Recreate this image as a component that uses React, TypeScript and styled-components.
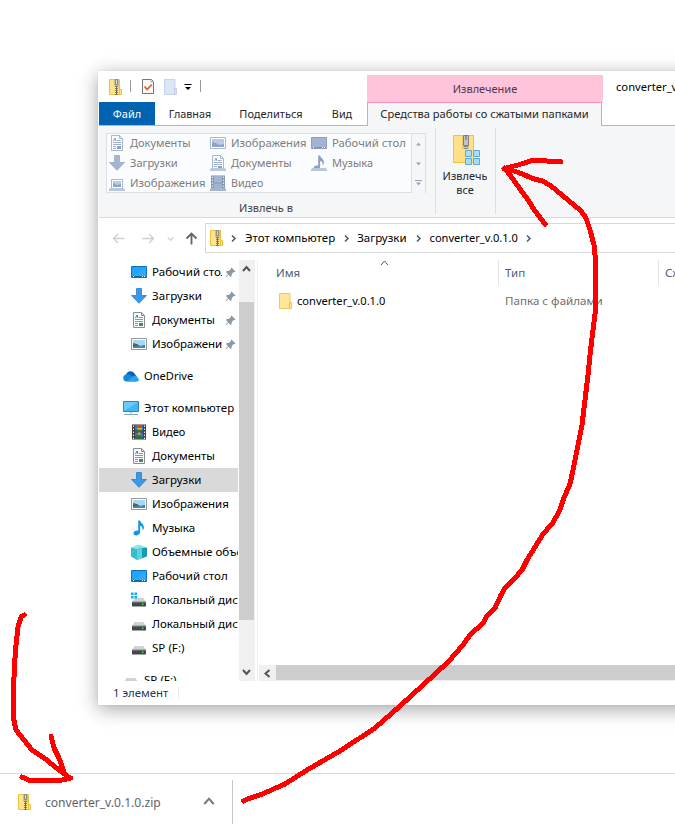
import React from "react";
import styled, { createGlobalStyle } from "styled-components";

const GlobalStyle = createGlobalStyle`
  * { box-sizing: border-box; }
  body { margin: 0; background: #fff; overflow: hidden; font-family: "Noto Sans", sans-serif; font-size: 11px; color: #000; }
  svg { display: block; flex: none; }
`;

const Screen = styled.div`
  position: relative;
  width: 675px;
  height: 830px;
  overflow: hidden;
  display: flex;
  flex-direction: column;
  background: #fff;
`;

const Desktop = styled.div`
  height: 773px;
  padding: 71px 0 0 98px;
  overflow: hidden;
`;

const Window = styled.div`
  width: 700px;
  height: 634px;
  padding-left: 1px;
  background: #fff;
  box-shadow: 0 4px 18px rgba(0, 0, 0, 0.36), 0 0 1px rgba(0, 0, 0, 0.15);
  display: flex;
  flex-direction: column;
`;

const Label = styled.span<{ $size?: number; $color?: string }>`
  flex: none;
  white-space: nowrap;
  line-height: 16px;
  font-size: ${(p) => p.$size ?? 11}px;
  color: ${(p) => p.$color ?? "inherit"};
`;

/* Title bar */
const TitleBar = styled.div`
  display: grid;
  grid-template-columns: 268px 236px 1fr;
  height: 31px;
  flex: none;
`;
const QuickAccess = styled.div`
  display: flex;
  align-items: center;
  padding-left: 9px;
`;
const Tick = styled.i<{ $left: number; $right: number }>`
  width: 1px;
  height: 12px;
  background: #9a9a9a;
  margin: 0 ${(p) => p.$right}px 2px ${(p) => p.$left}px;
`;
const Spacer = styled.i<{ $w: number }>`
  width: ${(p) => p.$w}px;
  flex: none;
`;
const ContextTitle = styled.div`
  margin-top: 4px;
  background: #ffc4dc;
  color: #4c3a45;
  display: flex;
  align-items: center;
  justify-content: center;
`;
const WindowTitle = styled.div`
  padding: 8px 0 0 13px;
  overflow: hidden;
`;

/* Tabs */
const TabRow = styled.div`
  display: flex;
  height: 24px;
  flex: none;
  color: #262626;
`;
const Tab = styled.div<{ $w: number; $kind?: "file" | "active" }>`
  width: ${(p) => p.$w}px;
  flex: none;
  display: flex;
  align-items: center;
  justify-content: center;
  ${(p) =>
    p.$kind === "file"
      ? "background:#0063b1;color:#fff;border-bottom:1px solid #ff90bd;"
      : p.$kind === "active"
      ? "background:#f4f6f8;border:1px solid #ff90bd;border-bottom:0;padding-bottom:2px;"
      : "border-bottom:1px solid #ff90bd;"}
`;

/* Ribbon */
const Ribbon = styled.div`
  height: 92px;
  flex: none;
  display: flex;
  background: #f4f6f8;
  border-bottom: 1px solid #d9dadb;
`;
const GalleryGroup = styled.div`
  width: 336px;
  padding: 7px 9px 0 7px;
  display: flex;
  flex-direction: column;
  align-items: center;
  gap: 7px;
  color: #444;
`;
const Gallery = styled.div`
  display: grid;
  grid-template-columns: 1fr 14px;
  width: 320px;
  height: 60px;
  border: 1px solid #dcdfe3;
  background: #fbfcfd;
`;
const GalleryGrid = styled.div`
  display: grid;
  grid-template-columns: 101px 101px 1fr;
  grid-template-rows: repeat(3, 20px);
  padding-left: 2px;
  margin-top: -1px;
`;
const GalleryItem = styled.div`
  display: flex;
  align-items: center;
  gap: 5px;
  color: #7d7d7d;
`;
const GalleryScroll = styled.div`
  display: grid;
  grid-template-rows: 1fr 1fr 1fr;
  place-items: center;
  border-left: 1px solid #dcdfe3;
  background: #f4f6f8;
`;
const ExtractGroup = styled.div`
  width: 61px;
  margin: 2px 0 3px;
  border-left: 1px solid #dcdfe3;
  border-right: 1px solid #dcdfe3;
  padding-top: 5px;
  display: flex;
  flex-direction: column;
  align-items: center;
  color: #262626;
`;
const ExtractCaption = styled.div`
  display: flex;
  flex-direction: column;
  align-items: center;
  margin-top: 1px;
  padding-right: 1px;
`;
const CaptionLine = styled(Label)`
  line-height: 13px;
  overflow: hidden;
  &:first-child { line-height: 15px; }
`;

/* Address bar */
const AddressRow = styled.div`
  display: flex;
  height: 30px;
  margin-top: 5px;
  flex: none;
`;
const NavButtons = styled.div`
  width: 106px;
  padding-left: 13px;
  display: flex;
  align-items: center;
`;
const AddressBox = styled.div`
  flex: 1;
  display: flex;
  align-items: center;
  border: 1px solid #d9d9d9;
  border-right: 0;
  padding-left: 3px;
`;

/* Body */
const Body = styled.div`
  display: flex;
  height: 421px;
  margin-top: 7px;
  flex: none;
`;
const NavTree = styled.div`
  width: 139px;
  overflow: hidden;
  display: flex;
  flex-direction: column;
`;
const NavRow = styled.div<{ $root?: boolean; $selected?: boolean; $gap?: boolean }>`
  display: flex;
  align-items: center;
  gap: 5px;
  height: 24px;
  flex: none;
  overflow: hidden;
  margin-top: ${(p) => (p.$gap ? 8 : 0)}px;
  padding-left: ${(p) => (p.$root ? 24 : 32)}px;
  background: ${(p) => (p.$selected ? "#d9d9d9" : "transparent")};
`;
const NavText = styled(Label)<{ $pinned?: boolean }>`
  ${(p) => p.$pinned && "width:70px;overflow:hidden;margin-right:-2px;"}
`;
const VScroll = styled.div`
  width: 16px;
  margin-left: 1px;
  padding-right: 1px;
  display: flex;
  flex-direction: column;
  align-items: center;
  background: #f0f0f0;
`;
const VThumb = styled.div`
  width: 15px;
  height: 318px;
  background: #cdcdcd;
`;
const ScrollButton = styled.div<{ $w: number; $h: number }>`
  width: ${(p) => p.$w}px;
  height: ${(p) => p.$h}px;
  display: flex;
  align-items: center;
  justify-content: center;
  flex: none;
`;
const Files = styled.div`
  flex: 1;
  margin-left: 2px;
  border-left: 1px solid #f0f0f0;
  padding-left: 1px;
  display: flex;
  flex-direction: column;
  overflow: hidden;
`;
const HeaderRow = styled.div`
  display: grid;
  grid-template-columns: 240px 160px 60px;
  height: 25px;
  color: #4c607a;
`;
const HeaderCell = styled.div<{ $pad: number }>`
  display: flex;
  align-items: center;
  padding-left: ${(p) => p.$pad}px;
  border-right: 1px solid #e3e3e3;
`;
const SortMark = styled.span`
  align-self: flex-start;
  margin: -1px 0 0 80px;
`;
const FileRow = styled.div`
  display: grid;
  grid-template-columns: 227px 1fr;
  margin-top: 4px;
  height: 24px;
  padding-left: 19px;
  align-items: center;
`;
const FileName = styled.div`
  display: flex;
  align-items: center;
  gap: 3px;
`;
const HScroll = styled.div`
  margin-top: auto;
  height: 16px;
  display: flex;
  background: #f0f0f0;
`;
const HThumb = styled.div`
  flex: 1;
  height: 15px;
  background: #cdcdcd;
`;
const StatusBar = styled.div`
  display: flex;
  align-items: center;
  height: 24px;
  padding-left: 14px;
  color: #26365c;
  background: #fff;
`;
const StatusDivider = styled.i`
  width: 1px;
  height: 12px;
  margin-left: 10px;
  background: #ececec;
`;

/* Download shelf */
const Shelf = styled.div`
  flex: 1;
  border-top: 1px solid #d8d8d8;
  padding-top: 6px;
`;
const ShelfItem = styled.div`
  width: 233px;
  height: 44px;
  padding: 0 17px 0 17px;
  display: flex;
  align-items: center;
  gap: 12px;
  border-right: 1px solid #c6c6c6;
  color: #5f6368;
`;
const ShelfName = styled(Label)`
  padding-top: 1px;
`;
const ShelfChevron = styled.span`
  margin-left: auto;
`;
const Annotation = styled.svg`
  position: absolute;
  inset: 0;
  pointer-events: none;
`;

/* Icons */
const ZipIcon = () => (
  <svg width="16" height="18" viewBox="0 0 16 18">
    <path d="M1.5 1.5h9.500v10h2.500v5h-12z" fill="#ffe48d" stroke="#e9c23f" />
    <path d="M11.500 1.500v9.500M11.500 11v5" stroke="#e9c23f" />
    <path d="M6 1h5v7H6z" fill="#c9bd8c" />
    <path d="M7.500 1.500h2v5h-2z" fill="#dedede" stroke="#777" strokeWidth=".8" />
    <path d="M8.500 8v9" stroke="#85816f" strokeWidth="3" strokeDasharray="1 1" />
    <path d="M8.500 8v9" stroke="#6a6a6a" />
  </svg>
);
const FolderIcon = ({ blue = false }: { blue?: boolean }) => (
  <svg width="16" height="18" viewBox="0 0 16 18">
    <path d="M1.5 1.5H12v9h1.5v6H1.5z" fill={blue ? "#dce6f4" : "#ffe69a"} stroke={blue ? "#c5d3e8" : "#ecc95c"} />
    <path d="M11.5 16v-5.5h2" fill="none" stroke={blue ? "#bccbe2" : "#e6bf48"} />
  </svg>
);
const CheckDoc = () => (
  <svg width="14" height="17" viewBox="0 0 14 17">
    <path d="M1.5 1.5h9l2 2v12h-11z" fill="#fafafa" stroke="#757575" />
    <path d="M10 1.5V4h2.5" fill="none" stroke="#999" strokeWidth=".8" />
    <path d="M3.5 8.5l2.6 3 4.7-5" fill="none" stroke="#ec5b1d" strokeWidth="1.8" />
  </svg>
);
const QuickArrow = () => (
  <svg width="8" height="8" viewBox="0 0 8 8">
    <path d="M.5 1.500h7" stroke="#000" />
    <path d="M1 4h6L4 7z" fill="#000" />
  </svg>
);

type IconProps = { muted?: boolean };
const DesktopIcon = ({ muted }: IconProps) => (
  <svg width="16" height="16" viewBox="0 0 16 16">
    <path d="M.5 2.5h15v11H.5z" fill={muted ? "#a3b4d3" : "#20a3f8"} stroke={muted ? "#8c9fc2" : "#0a74bd"} />
    {!muted && <path d="M1 12.5L15 3v9z" fill="#40b2ff" opacity=".5" />}
    <path d="M1 12.5h14" stroke={muted ? "#7d91b6" : "#0868a8"} />
    <path d="M2 12.5h1m8 0h1m1 0h1" stroke="#fff" />
  </svg>
);
const DownloadIcon = ({ muted }: IconProps) => (
  <svg width="16" height="16" viewBox="0 0 16 16">
    <path d="M5.5.5h5v7h5L8 15.3.5 7.5h5z" fill={muted ? "#a5b4cf" : "#3b97e8"} stroke={muted ? "#98a9c8" : "#257dce"} strokeWidth=".8" />
  </svg>
);
const Tray = () => <path d="M0 14l2-1h12l2 1v2H0z" fill="#b9c6dc" />;
const DocumentIcon = ({ muted, tray }: IconProps & { tray?: boolean }) => {
  const edge = muted ? "#a9b7d0" : "#8c8c8c";
  return (
    <svg width="16" height="16" viewBox="0 0 16 16">
      <path d="M2.5.5h8l3 3v12h-11z" fill="#fafcff" stroke={edge} />
      <path d="M10.5.5v3h3" fill="none" stroke={edge} />
      <path d="M4.500 6l1.500-3 1 3" fill="none" stroke={muted ? "#8a9dc0" : "#1f8bd0"} />
      <path d="M8 5.500h3.500M4 7.500h8M4 9.500h8M4 11.500h3M4 13.500h3" stroke={muted ? "#9dadca" : "#5aa6d3"} />
      <path d="M8 11h4v3H8z" fill={muted ? "#8da0c2" : "#52806a"} />
      {tray && <Tray />}
    </svg>
  );
};
const PictureIcon = ({ muted, tray }: IconProps & { tray?: boolean }) => (
  <svg width="16" height="16" viewBox="0 0 16 16">
    <path d={tray ? "M2.500 4.500h11v9h-11z" : "M.5 2.500h15v11H.5z"} fill="#fff" stroke={muted ? "#a9b7d1" : "#969696"} />
    <path d={tray ? "M4 6h8v6H4z" : "M2 4h12v8H2z"} fill={muted ? "#b7cae6" : "#a9d6f6"} />
    <path d={tray ? "M4 8l4 2 4-1v3H4z" : "M2 7l4 1 3 2 5-1v3H2z"} fill={muted ? "#8fa3c6" : "#3c6f68"} />
    {!muted && <path d="M2 11c4-1.500 8-1 12-1v2H2z" fill="#4688b5" />}
    {tray && <Tray />}
  </svg>
);
const VideoIcon = ({ muted }: IconProps) => (
  <svg width="16" height="16" viewBox="0 0 16 16">
    <path d="M1 .5h14v15H1z" fill={muted ? "#8495b5" : "#383838"} />
    <path d="M2.500 1.500v14M13.500 1.500v14" stroke={muted ? "#dde5f2" : "#eee"} strokeWidth="1.200" strokeDasharray="1.500 1.500" />
    <path d="M4 1h8v6.500H4zM4 8.500h8v6.500H4z" fill={muted ? "#a3b3d0" : "#3d72c0"} />
    {!muted && (
      <>
        <path d="M7 1h3v2l1 1H6l1-1z" fill="#d9452f" />
        <path d="M6 4h5v1.500H6z" fill="#e5b92d" />
        <path d="M4 5.500h3l1 2H4zM9 6h3v1.500H9zM4 12l3-1 5 2v2H4z" fill="#2d6e42" />
        <path d="M7 8.500h3l-1 2.500H7z" fill="#d9952d" />
      </>
    )}
    {muted && <path d="M0 14l2-1h12l2 1v2H0z" fill="#a5b5d0" />}
  </svg>
);
const MusicIcon = ({ muted }: IconProps) => (
  <svg width="16" height="16" viewBox="0 0 16 16">
    <path d="M7.200.5h1.900c.2 2.700 4.600 3.600 3.700 8-.2 1-.8 1.800-1.300 2 .8-2.500-.6-4.200-2.400-4.700V12c0 4-6.600 4.700-6.600 1.300 0-2.300 2.900-3.400 4.700-2.500z" fill={muted ? "#8b9ec1" : "#0b98ee"} />
    {muted && <Tray />}
  </svg>
);
const CloudIcon = () => (
  <svg width="16" height="16" viewBox="0 0 16 16">
    <path d="M3 7c1-4 6-5 8.500-1.500L14 9H2z" fill="#0a62b8" />
    <path d="M3.500 13.500A3.500 3.500 0 013 6.600c2-.6 3.500 0 5 1l6 5-1 .9z" fill="#1388d8" />
    <path d="M4 13.200L10 8.600c1-1.300 3.800-1 4.200 1 2.400.8 2.200 3.900-.5 3.900h-9z" fill="#2ba3ec" />
  </svg>
);
const ComputerIcon = () => (
  <svg width="16" height="16" viewBox="0 0 16 16">
    <path d="M.5 1.500h15v10H.5z" fill="#41b7f5" stroke="#3384b5" />
    <path d="M1 11L15 2H1z" fill="#84d5ff" opacity=".65" />
    <path d="M6.500 12h3v1.500h-3z" fill="#c3d1dc" />
    <path d="M1 14.500h14" stroke="#7fa9c4" />
  </svg>
);
const CubeIcon = () => (
  <svg width="16" height="16" viewBox="0 0 16 16">
    <path d="M0 3.500L8 .5l8 3-8 2z" fill="#8be4ea" />
    <path d="M0 3.500l6 1.500v11L0 12.500z" fill="#39bccb" />
    <path d="M6 5l10-1.500v9L6 16z" fill="#169bb0" />
    <path d="M6 5l5-.7v10L6 16z" fill="#5ed2da" />
  </svg>
);
const DriveIcon = ({ system }: { system?: boolean }) => (
  <svg width="16" height="16" viewBox="0 0 16 16">
    <path d="M3.500 6h9L15 10H1z" fill="#d0d3d5" />
    <path d="M1 10h14v4.500H1z" fill="#444749" />
    <path d="M1 10h14" stroke="#8a8d8f" />
    <path d="M11 11.500h1.500v1.500h-1.500z" fill="#35e04a" />
    {system && <path d="M0 .500h2.500v2.500H0zM3.500.500h2.500v2.500h-2.500zM0 4h2.500v2.500H0zM3.500 4h2.500v2.500h-2.500z" fill="#08b1ec" />}
  </svg>
);
const PinIcon = () => (
  <svg width="11" height="11" viewBox="0 0 11 11">
    <path d="M6.500.5l4 4-1.200.7-.7-.2-2 2.200v2l-1 .8-2.200-2.200L1 10.300l-.6-.5 2.500-2.600L1 5l.8-1h2l2.200-2-.2-.8z" fill="#8b98a3" />
  </svg>
);
const ExtractIcon = () => (
  <svg width="32" height="34" viewBox="0 0 32 34">
    <path d="M3.500 2.500h20v27h-20z" fill="#ffe08a" stroke="#ecc343" />
    <path d="M12 2h7v14h-7z" fill="#e8c86a" />
    <path d="M13.500 2.500h5v10h-5z" fill="#c4c4c4" stroke="#808080" />
    <path d="M16 3v4" stroke="#666" />
    <path d="M16 13v4" stroke="#888" strokeWidth="4" strokeDasharray="1 1" />
    <path d="M15.500 17.500h6v6h-6zM23.500 17.500h6v6h-6zM15.500 25.500h6v6h-6zM23.500 25.500h6v6h-6z" fill="#a9dcfa" stroke="#5ea7d8" />
  </svg>
);

const chevrons = {
  up: "M1 6l3.500-4L8 6",
  down: "M1 3l3.500 4L8 3",
  left: "M6.500 1l-4 3.500 4 3.500",
  right: "M3 1.500l3 3-3 3",
};
const Chevron = ({ dir, color = "#555", width = 1.5, size = 9 }: { dir: keyof typeof chevrons; color?: string; width?: number; size?: number }) => (
  <svg width={size} height={size} viewBox="0 0 9 9">
    <path d={chevrons[dir]} fill="none" stroke={color} strokeWidth={width} />
  </svg>
);
const arrows = {
  left: "M12.500 6.500H1.500M6 2l-4.500 4.500 4.500 4.500",
  right: "M.5 6.500h11M7 2l4.500 4.500-4.500 4.500",
  up: "M6.500 12.500V2M1.500 6.500l5-5 5 5",
};
const NavArrow = ({ dir, color, width }: { dir: keyof typeof arrows; color: string; width: number }) => (
  <svg width="13" height="13" viewBox="0 0 13 13">
    <path d={arrows[dir]} fill="none" stroke={color} strokeWidth={width} />
  </svg>
);
const Triangle = ({ dir }: { dir: "up" | "down" | "more" }) => (
  <svg width="7" height="8" viewBox="0 0 7 8">
    {dir === "up" ? <path d="M1 5.500h5L3.500 2.500z" fill="#98a5b5" /> : <path d="M1 3.500h5L3.500 6.500z" fill="#98a5b5" />}
    {dir === "more" && <path d="M0 1.500h7" stroke="#98a5b5" />}
  </svg>
);

const gallery: [React.ReactNode, string, number][] = [
  [<DocumentIcon muted />, "Документы", 11],
  [<PictureIcon muted />, "Изображения", 11.3],
  [<DesktopIcon muted />, "Рабочий стол", 11.3],
  [<DownloadIcon muted />, "Загрузки", 11.1],
  [<DocumentIcon muted tray />, "Документы", 11],
  [<MusicIcon muted />, "Музыка", 11],
  [<PictureIcon muted tray />, "Изображения", 11.3],
  [<VideoIcon muted />, "Видео", 10.7],
];

type NavEntry = { icon: React.ReactNode; text: string; pinned?: boolean; root?: boolean; gap?: boolean; selected?: boolean; size?: number };
const navEntries: NavEntry[] = [
  { icon: <DesktopIcon />, text: "Рабочий стол", pinned: true },
  { icon: <DownloadIcon />, text: "Загрузки", pinned: true },
  { icon: <DocumentIcon />, text: "Документы", pinned: true, size: 11.4 },
  { icon: <PictureIcon />, text: "Изображения", pinned: true, size: 11.5 },
  { icon: <CloudIcon />, text: "OneDrive", root: true, gap: true, size: 11.1 },
  { icon: <ComputerIcon />, text: "Этот компьютер", root: true, gap: true, size: 11.5 },
  { icon: <VideoIcon />, text: "Видео", size: 11 },
  { icon: <DocumentIcon />, text: "Документы", size: 11.4 },
  { icon: <DownloadIcon />, text: "Загрузки", selected: true, size: 11.5 },
  { icon: <PictureIcon />, text: "Изображения", size: 11.5 },
  { icon: <MusicIcon />, text: "Музыка" },
  { icon: <CubeIcon />, text: "Объемные объекты" },
  { icon: <DesktopIcon />, text: "Рабочий стол" },
  { icon: <DriveIcon system />, text: "Локальный диск (C:)", size: 11.5 },
  { icon: <DriveIcon />, text: "Локальный диск (D:)", size: 11.5 },
  { icon: <DriveIcon />, text: "SP (F:)" },
  { icon: <DriveIcon />, text: "SP (F:)", root: true, gap: true },
];

export default function App() {
  return (
    <Screen>
      <GlobalStyle />
      <Desktop>
        <Window>
          <TitleBar>
            <QuickAccess>
              <ZipIcon />
              <Tick $left={6} $right={10} />
              <CheckDoc />
              <Spacer $w={8} />
              <FolderIcon blue />
              <Spacer $w={5} />
              <QuickArrow />
              <Tick $left={8} $right={0} />
            </QuickAccess>
            <ContextTitle>
              <Label>Извлечение</Label>
            </ContextTitle>
            <WindowTitle>
              <Label $size={11.2}>converter_v.0.1.0</Label>
            </WindowTitle>
          </TitleBar>
          <TabRow>
            <Tab $w={56} $kind="file"><Label>Файл</Label></Tab>
            <Tab $w={70}><Label $size={10.8}>Главная</Label></Tab>
            <Tab $w={92}><Label>Поделиться</Label></Tab>
            <Tab $w={50}><Label $size={10.8}>Вид</Label></Tab>
            <Tab $w={235} $kind="active"><Label $size={11.1}>Средства работы со сжатыми папками</Label></Tab>
            <Tab $w={200} />
          </TabRow>
          <Ribbon>
            <GalleryGroup>
              <Gallery>
                <GalleryGrid>
                  {gallery.map(([icon, text, size], i) => (
                    <GalleryItem key={i}>
                      {icon}
                      <Label $size={size}>{text}</Label>
                    </GalleryItem>
                  ))}
                </GalleryGrid>
                <GalleryScroll>
                  <Triangle dir="up" />
                  <Triangle dir="down" />
                  <Triangle dir="more" />
                </GalleryScroll>
              </Gallery>
              <Label>Извлечь в</Label>
            </GalleryGroup>
            <ExtractGroup>
              <ExtractIcon />
              <ExtractCaption>
                <CaptionLine>Извлечь</CaptionLine>
                <CaptionLine>все</CaptionLine>
              </ExtractCaption>
            </ExtractGroup>
          </Ribbon>
          <AddressRow>
            <NavButtons>
              <NavArrow dir="left" color="#d0d0d0" width={1.4} />
              <Spacer $w={17} />
              <NavArrow dir="right" color="#d0d0d0" width={1.4} />
              <Spacer $w={12} />
              <Chevron dir="down" color="#d0d0d0" size={7} />
              <Spacer $w={11} />
              <NavArrow dir="up" color="#666" width={1.8} />
            </NavButtons>
            <AddressBox>
              <ZipIcon />
              <Spacer $w={4} />
              <Chevron dir="right" />
              <Spacer $w={7} />
              <Label $size={11.5}>Этот компьютер</Label>
              <Spacer $w={7} />
              <Chevron dir="right" />
              <Spacer $w={6} />
              <Label $size={11.5}>Загрузки</Label>
              <Spacer $w={7} />
              <Chevron dir="right" />
              <Spacer $w={7} />
              <Label $size={11.1}>converter_v.0.1.0</Label>
              <Spacer $w={6} />
              <Chevron dir="right" />
            </AddressBox>
          </AddressRow>
          <Body>
            <NavTree>
              {navEntries.map((e, i) => (
                <NavRow key={i} $root={e.root} $gap={e.gap} $selected={e.selected}>
                  {e.icon}
                  <NavText $size={e.size ?? 11.6} $pinned={e.pinned}>{e.text}</NavText>
                  {e.pinned && <PinIcon />}
                </NavRow>
              ))}
            </NavTree>
            <VScroll>
              <ScrollButton $w={15} $h={18}><Chevron dir="up" width={2} /></ScrollButton>
              <ScrollButton $w={15} $h={24} />
              <VThumb />
              <ScrollButton $w={15} $h={43} />
              <ScrollButton $w={15} $h={17}><Chevron dir="down" width={2} /></ScrollButton>
            </VScroll>
            <Files>
              <HeaderRow>
                <HeaderCell $pad={17}>
                  <Label $size={11.5}>Имя</Label>
                  <SortMark><Chevron dir="up" width={1} /></SortMark>
                </HeaderCell>
                <HeaderCell $pad={6}><Label $size={11.5}>Тип</Label></HeaderCell>
                <HeaderCell $pad={6}><Label $size={11.5}>Сжатый размер</Label></HeaderCell>
              </HeaderRow>
              <FileRow>
                <FileName>
                  <FolderIcon />
                  <Label $size={11.1}>converter_v.0.1.0</Label>
                </FileName>
                <Label $size={11.6} $color="#6d6d6d">Папка с файлами</Label>
              </FileRow>
              <HScroll>
                <ScrollButton $w={17} $h={16}><Chevron dir="left" width={2} /></ScrollButton>
                <HThumb />
              </HScroll>
            </Files>
          </Body>
          <StatusBar>
            <Label $size={11.4}>1 элемент</Label>
            <StatusDivider />
          </StatusBar>
        </Window>
      </Desktop>
      <Shelf>
        <ShelfItem>
          <ZipIcon />
          <ShelfName $size={12.1}>converter_v.0.1.0.zip</ShelfName>
          <ShelfChevron><Chevron dir="up" size={12} color="#777" width={1.5} /></ShelfChevron>
        </ShelfItem>
      </Shelf>
      <Annotation width="675" height="830" viewBox="0 0 675 830" fill="none" stroke="#f00" strokeWidth="5" strokeLinecap="round" strokeLinejoin="round" shapeRendering="crispEdges">
        <path d="M24.500 615L21 617L18 627L16 645L14.500 665L13.500 690V718L16 730L24 740L32 750L47 760L55 767L70 778" />
        <path d="M51 736L54 748L59 758L64 772M22 777L30 780.500H60L71 778" />
        <path d="M243.500 801L250 798L260 795L285 784L307 770L340 751L375 728L400 706L423 685L448 662L463 645L470 635L483 623L487 616L495 608L501 595L505 588L515 578L522 570L527 560L543 534L552 524L560 510L563 500L570 484L573 470L578 445L582 425L585 400L588 375L590 355L593 330L595.500 310V260L594 245L590 230L586 218L580 210L568 200L551 186L543 181L534 179L520 173L505 168" />
        <path d="M504 168.500L518 165L532 160.500L561 161.500M505 168.500L515 182L528 200L535 211L545 224" />
      </Annotation>
    </Screen>
  );
}
